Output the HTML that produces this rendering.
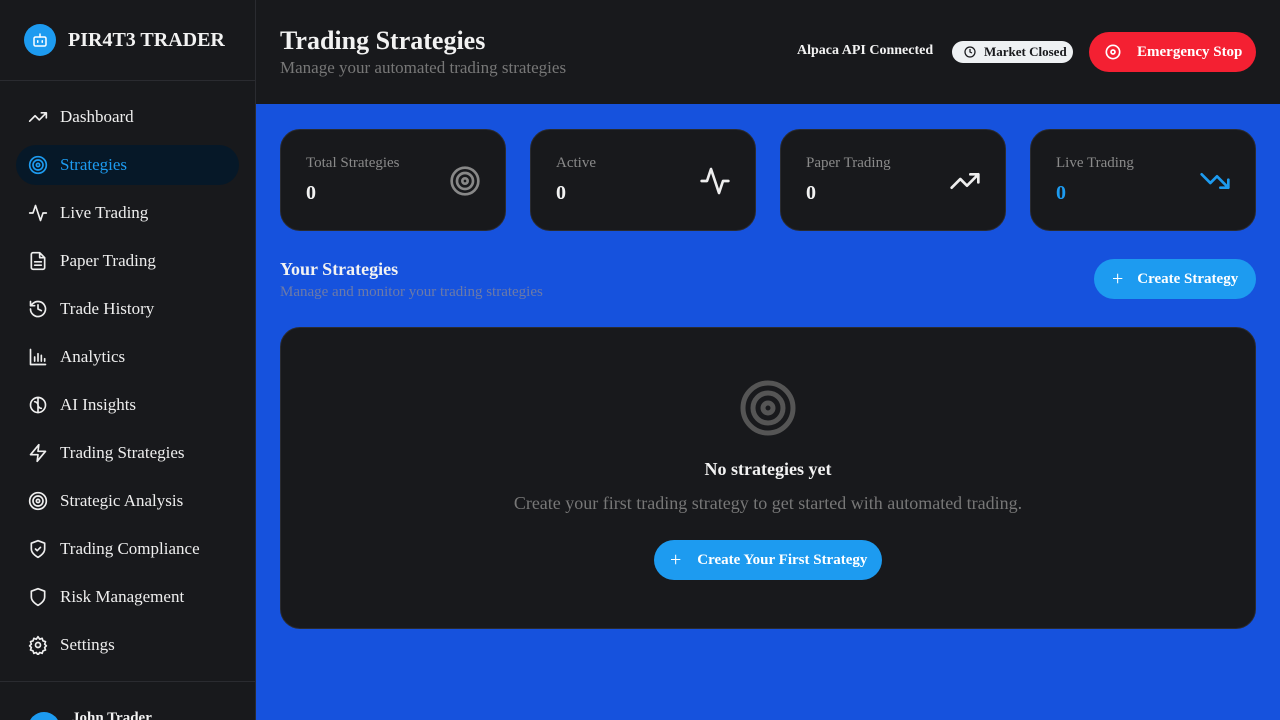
<!DOCTYPE html>
<html><head><meta charset="utf-8"><style>
*{box-sizing:border-box;margin:0;padding:0}
html,body{width:1280px;height:720px;overflow:hidden}
body{background:#1652dd;font-family:"Liberation Serif","DejaVu Serif",serif;color:#f2f2f2;position:relative}
.sb{position:absolute;left:0;top:0;width:256px;height:720px;background:#18191c;border-right:1px solid #2a2b30;overflow:hidden}
.logo{height:81px;border-bottom:1px solid #2a2b30;display:flex;align-items:center;padding-left:24px}
.logo .c{width:32px;height:32px;border-radius:50%;background:#1d9bf0;display:flex;align-items:center;justify-content:center;margin-right:12px}
.logo b{font-size:20px}
.nav{padding-top:16px}
.it{height:40px;margin:0 16px 8px;border-radius:20px;display:flex;align-items:center;padding-left:12px;font-size:17px;color:#eee}
.it svg{width:20px;height:20px;margin-right:12px;fill:none;stroke:#eee;stroke-width:2;stroke-linecap:round;stroke-linejoin:round}
.it.a{background:#061828;color:#1d9bf0}.it.a svg{stroke:#1d9bf0}
.foot{position:absolute;left:0;right:0;top:681px;height:60px;border-top:1px solid #2a2b30}
.hd{position:absolute;left:256px;top:0;right:0;height:104px;background:#18191c}
.card{position:absolute;top:129px;width:226px;height:102px;background:#18191c;border-radius:20px;border:1px solid #2a2b30}
.card .l{position:absolute;left:25px;top:25px;font-size:15px;color:#8a8a8a}
.card .v{position:absolute;left:25px;top:52px;font-size:20px;font-weight:bold}
.card svg{position:absolute;right:24px;top:35px;width:32px;height:32px;fill:none;stroke-width:2;stroke-linecap:round;stroke-linejoin:round}
.btn{position:absolute;background:#1d9bf0;border-radius:20px;color:#fff;font-weight:bold;font-size:15px;display:flex;align-items:center}
</style></head><body>
<div class="sb">
<div class="logo"><div class="c"><svg width="18" height="18" viewBox="0 0 24 24" fill="none" stroke="#fff" stroke-width="2" stroke-linecap="round"><rect x="4" y="8" width="16" height="12" rx="2"/><path d="M12 8V4M9 13v2M15 13v2"/></svg></div><b>PIR4T3 TRADER</b></div>
<div class="nav">
<div class="it"><svg viewBox="0 0 24 24"><path d="M22 7l-8.5 8.5-5-5L2 17M16 7h6v6"/></svg>Dashboard</div>
<div class="it a"><svg viewBox="0 0 24 24"><circle cx="12" cy="12" r="10"/><circle cx="12" cy="12" r="6"/><circle cx="12" cy="12" r="2"/></svg>Strategies</div>
<div class="it"><svg viewBox="0 0 24 24"><path d="M22 12h-4l-3 9L9 3l-3 9H2"/></svg>Live Trading</div>
<div class="it"><svg viewBox="0 0 24 24"><path d="M14 2H6a2 2 0 0 0-2 2v16a2 2 0 0 0 2 2h12a2 2 0 0 0 2-2V8zM14 2v6h6M8 13h8M8 17h8"/></svg>Paper Trading</div>
<div class="it"><svg viewBox="0 0 24 24"><path d="M3 12a9 9 0 1 0 3-6.7L3 8M3 3v5h5M12 7v5l4 2"/></svg>Trade History</div>
<div class="it"><svg viewBox="0 0 24 24"><path d="M3 3v18h18M8 17v-5M12 17V8M16 17v-7M20 17v-3"/></svg>Analytics</div>
<div class="it"><svg viewBox="0 0 24 24"><circle cx="12" cy="12" r="9"/><path d="M12 3v18M8 8c2 0 4 2 4 4M16 16c-2 0-4-2-4-4"/></svg>AI Insights</div>
<div class="it"><svg viewBox="0 0 24 24"><path d="M13 2L3 14h9l-1 8 10-12h-9z"/></svg>Trading Strategies</div>
<div class="it"><svg viewBox="0 0 24 24"><circle cx="12" cy="12" r="10"/><circle cx="12" cy="12" r="6"/><circle cx="12" cy="12" r="2"/></svg>Strategic Analysis</div>
<div class="it"><svg viewBox="0 0 24 24"><path d="M12 22s8-4 8-10V5l-8-3-8 3v7c0 6 8 10 8 10zM9 12l2 2 4-4"/></svg>Trading Compliance</div>
<div class="it"><svg viewBox="0 0 24 24"><path d="M12 22s8-4 8-10V5l-8-3-8 3v7c0 6 8 10 8 10z"/></svg>Risk Management</div>
<div class="it"><svg viewBox="0 0 24 24"><circle cx="12" cy="12" r="3"/><path d="M12 2l2 3 3-1 1 3 3 1-1 3 2 2-2 2 1 3-3 1-1 3-3-1-2 3-2-3-3 1-1-3-3-1 1-3-2-2 2-2-1-3 3-1 1-3 3 1z"/></svg>Settings</div>
</div>
<div class="foot"><div style="position:absolute;left:28px;top:30px;width:32px;height:32px;border-radius:50%;background:#1d9bf0"></div><div style="position:absolute;left:72px;top:28px;font-size:15px;font-weight:bold">John Trader</div></div>
</div>
<div class="hd">
<div style="position:absolute;left:24px;top:26px;font-size:26px;font-weight:bold">Trading Strategies</div>
<div style="position:absolute;left:24px;top:58px;font-size:17px;color:#777">Manage your automated trading strategies</div>
<div style="position:absolute;left:541px;top:43px;font-size:14px;font-weight:bold">Alpaca API Connected</div>
<div style="position:absolute;left:696px;top:41px;width:121px;height:22px;border-radius:11px;background:#eef1f3;color:#18191c;font-size:13px;font-weight:bold;display:flex;align-items:center;padding-left:12px"><svg width="12" height="12" viewBox="0 0 24 24" fill="none" stroke="#18191c" stroke-width="2.5" style="margin-right:8px"><circle cx="12" cy="12" r="10"/><path d="M12 6v6l4 2"/></svg>Market Closed</div>
<div style="position:absolute;left:833px;top:32px;width:167px;height:40px;border-radius:20px;background:#f42032;color:#fff;font-size:15px;font-weight:bold;display:flex;align-items:center;padding-left:16px"><svg width="16" height="16" viewBox="0 0 24 24" fill="none" stroke="#fff" stroke-width="2.5" style="margin-right:16px"><circle cx="12" cy="12" r="10"/><circle cx="12" cy="12" r="3"/></svg>Emergency Stop</div>
</div>
<div class="card" style="left:280px"><div class="l">Total Strategies</div><div class="v">0</div><svg viewBox="0 0 24 24" stroke="#888"><circle cx="12" cy="12" r="10"/><circle cx="12" cy="12" r="6"/><circle cx="12" cy="12" r="2"/></svg></div>
<div class="card" style="left:530px"><div class="l">Active</div><div class="v">0</div><svg viewBox="0 0 24 24" stroke="#eee"><path d="M22 12h-4l-3 9L9 3l-3 9H2"/></svg></div>
<div class="card" style="left:780px"><div class="l">Paper Trading</div><div class="v">0</div><svg viewBox="0 0 24 24" stroke="#eee"><path d="M22 7l-8.5 8.5-5-5L2 17M16 7h6v6"/></svg></div>
<div class="card" style="left:1030px"><div class="l">Live Trading</div><div class="v" style="color:#1d9bf0">0</div><svg viewBox="0 0 24 24" stroke="#1d9bf0"><path d="M22 17l-8.5-8.5-5 5L2 7M16 17h6v-6"/></svg></div>
<div style="position:absolute;left:280px;top:259px;font-size:18px;font-weight:bold">Your Strategies</div>
<div style="position:absolute;left:280px;top:284px;font-size:15px;color:#6c7aa8">Manage and monitor your trading strategies</div>
<div class="btn" style="left:1094px;top:259px;width:162px;height:40px;padding-left:18px"><span style="font-size:20px;font-weight:normal;margin-right:14px">+</span>Create Strategy</div>
<div style="position:absolute;left:280px;top:327px;width:976px;height:302px;background:#18191c;border-radius:20px;border:1px solid #2a2b30">
<svg style="position:absolute;left:457px;top:50px" width="60" height="60" viewBox="0 0 24 24" fill="none" stroke="#555" stroke-width="2"><circle cx="12" cy="12" r="10"/><circle cx="12" cy="12" r="6"/><circle cx="12" cy="12" r="2"/></svg>
<div style="position:absolute;left:0;right:0;top:131px;text-align:center;font-size:18px;font-weight:bold">No strategies yet</div>
<div style="position:absolute;left:0;right:0;top:165px;text-align:center;font-size:18px;color:#777">Create your first trading strategy to get started with automated trading.</div>
<div class="btn" style="left:373px;top:212px;width:228px;height:40px;padding-left:16px"><span style="font-size:20px;font-weight:normal;margin-right:16px">+</span>Create Your First Strategy</div>
</div>
</body></html>
